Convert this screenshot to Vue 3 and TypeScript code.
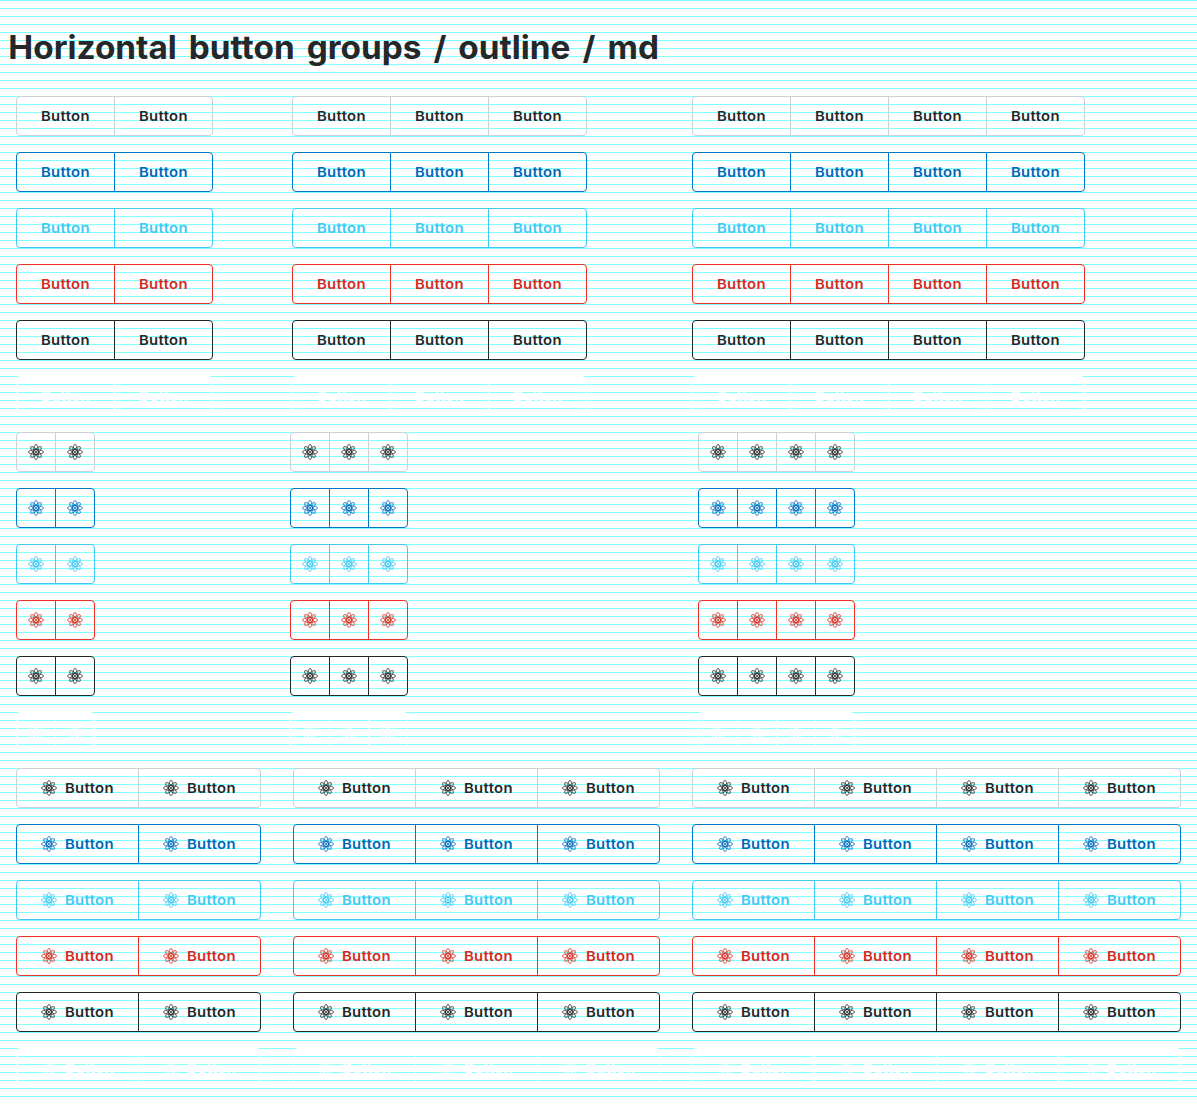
<script setup lang="ts">
interface Section {
  name: string
  icon: boolean
  label: boolean
}

const sections: Section[] = [
  { name: 'text', icon: false, label: true },
  { name: 'icon', icon: true, label: false },
  { name: 'both', icon: true, label: true },
]
const tones: string[] = ['neutral', 'primary', 'info', 'danger', 'dark', 'white']
const counts: number[] = [2, 3, 4]
const angles: number[] = [0, 45, 90, 135]
</script>

<template>
  <main class="page">
    <h1 class="title">Horizontal button groups / outline / md</h1>
    <section v-for="s in sections" :key="s.name" class="section" :class="s.name">
      <template v-for="tone in tones" :key="tone">
        <div v-for="n in counts" :key="n" class="group" :class="tone">
          <button v-for="i in n" :key="i" type="button" class="btn">
            <svg v-if="s.icon" class="atom" viewBox="0 0 16 16" aria-hidden="true">
              <ellipse
                v-for="a in angles"
                :key="a"
                cx="8"
                cy="8"
                :rx="a % 90 ? 7.3 : 7.6"
                ry="2.35"
                :transform="`rotate(${a} 8 8)`"
              />
              <circle cx="8" cy="8" r="2.5" />
              <circle class="core" cx="8" cy="8" r="1" />
            </svg>
            <span v-if="s.label" class="label">Button</span>
          </button>
        </div>
      </template>
    </section>
  </main>
</template>

<style>
body {
  margin: 0;
  background: #fff;
}
</style>

<style scoped>
.page {
  box-sizing: border-box;
  height: 1104px;
  overflow: hidden;
  background: repeating-linear-gradient(to bottom, #7fffff 0, #7fffff 1px, #fff 1px, #fff 8px);
  font-family: Inter, "Liberation Sans", sans-serif;
}
.title {
  box-sizing: border-box;
  height: 96px;
  margin: 0;
  padding: 28px 0 0 8px;
  font-size: 32px;
  font-weight: 700;
  line-height: 40px;
  letter-spacing: 0;
  word-spacing: 4px;
  color: #25282a;
  white-space: nowrap;
  transform: scaleX(1.041);
  transform-origin: 0 0;
}
.section {
  display: grid;
  grid-auto-rows: 40px;
  row-gap: 16px;
  padding: 0 0 16px 16px;
}
.text { grid-template-columns: 276px 400px max-content; }
.icon { grid-template-columns: 274px 408px max-content; }
.both { grid-template-columns: 277px 399px max-content; }
.group { display: flex; color: var(--text); }
.btn {
  box-sizing: border-box;
  display: flex;
  align-items: center;
  justify-content: center;
  width: 99px;
  height: 40px;
  margin: 0 0 0 -1px;
  padding: 0;
  border: 1px solid var(--line);
  background: transparent;
  color: inherit;
  font: 600 13.5px/20px Inter, "Liberation Sans", sans-serif;
}
.icon .btn { width: 40px; }
.both .btn { width: 123px; gap: 8px; }
.btn:first-child { margin-left: 0; border-radius: 4px 0 0 4px; }
.btn:last-child { border-radius: 0 4px 4px 0; }
.label {
  width: 49px;
  letter-spacing: 0.3px;
  text-align: left;
  white-space: nowrap;
  transform: scaleX(1.1);
  transform-origin: 0 50%;
}
.atom {
  width: 16px;
  height: 16px;
  flex: none;
  fill: none;
  stroke: currentColor;
  stroke-width: 0.75;
}
.core { fill: currentColor; stroke: none; }
.neutral { --line: #cdd0d6; --text: #25282a; }
.primary { --line: #0077c8; --text: #0067b9; }
.info { --line: #41c8f4; --text: #41c8f4; }
.danger { --line: #ee3124; --text: #d52b1e; }
.dark { --line: #25282a; --text: #25282a; }
.white { --line: #fff; --text: #fff; }
</style>
